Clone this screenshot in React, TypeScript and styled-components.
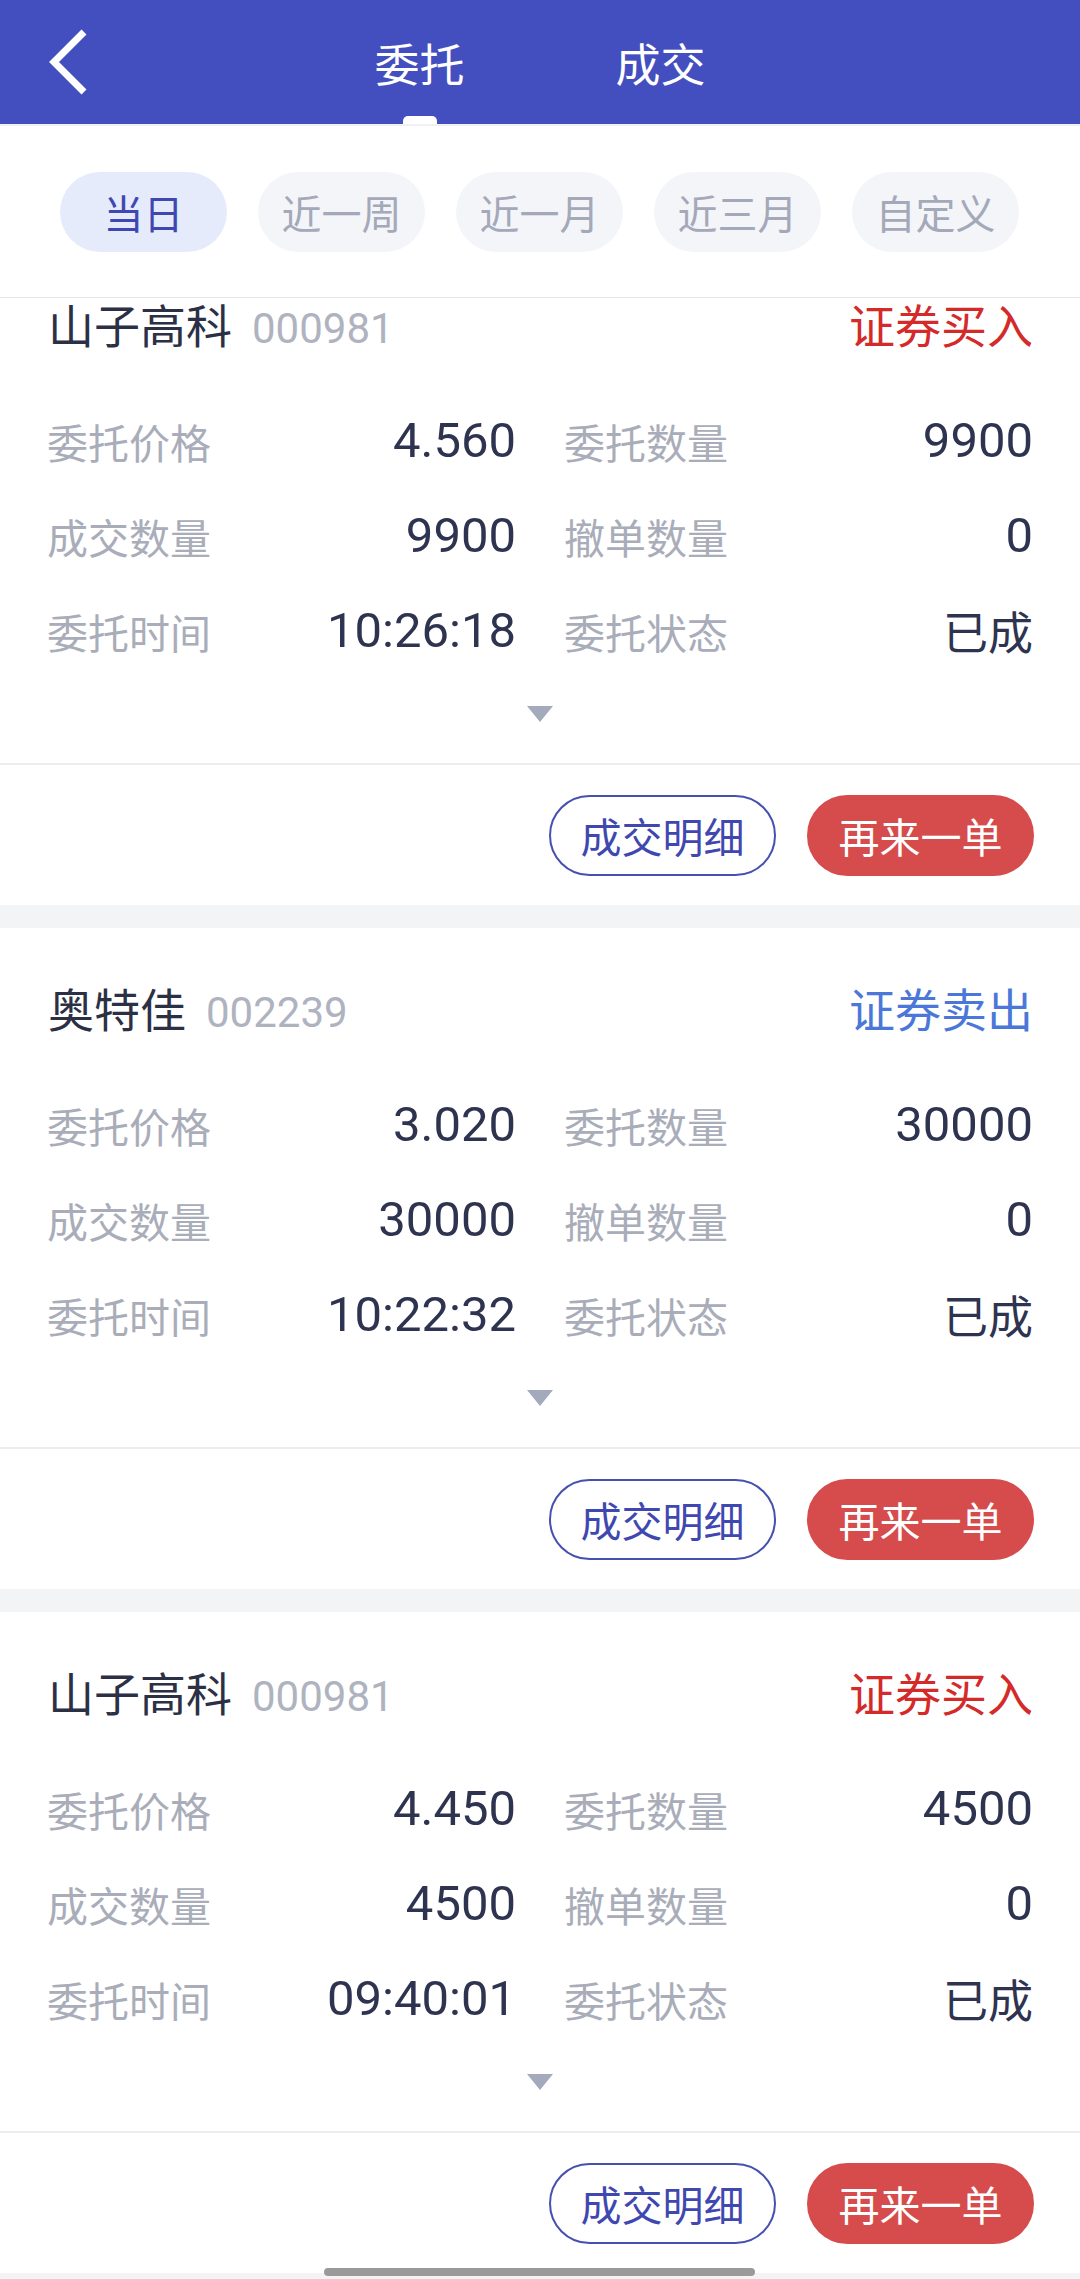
import React, { useState } from "react";
import styled, { createGlobalStyle } from "styled-components";

const colors = {
  brand: "#444fbf",
  brandText: "#3f48b0",
  title: "#2c3045",
  value: "#2e3350",
  label: "#a9adb9",
  code: "#afb3bf",
  buy: "#d42a2a",
  sell: "#4b78d8",
  line: "#ecedf0",
  band: "#f3f4f6",
  again: "#d64b4b",
};

const GlobalStyle = createGlobalStyle`
  html, body {
    margin: 0;
    padding: 0;
    background: #ffffff;
  }
  body {
    font-family: Roboto, "Noto Sans CJK SC", "Noto Sans", sans-serif;
    -webkit-font-smoothing: antialiased;
  }
  * {
    box-sizing: border-box;
  }
`;

const Page = styled.div`
  position: relative;
  width: 1080px;
  height: 2279px;
  display: flex;
  flex-direction: column;
  overflow: hidden;
  background: #ffffff;
`;

const NavBar = styled.header`
  height: 124px;
  flex-shrink: 0;
  display: grid;
  grid-template-columns: 1fr auto 1fr;
  align-items: center;
  background: ${colors.brand};
`;

const BackButton = styled.button`
  justify-self: start;
  margin-left: 44px;
  padding: 0;
  border: none;
  background: transparent;
  display: flex;
  align-items: center;
  cursor: pointer;

  svg {
    width: 44px;
    height: 66px;
  }
`;

const Tabs = styled.nav`
  display: flex;
  height: 124px;
`;

const Tab = styled.div<{ active: boolean }>`
  position: relative;
  width: 241px;
  display: flex;
  align-items: center;
  justify-content: center;
  color: #ffffff;
  font-size: 45px;
  cursor: pointer;

  &::after {
    content: "";
    display: ${(p) => (p.active ? "block" : "none")};
    position: absolute;
    bottom: 0;
    left: 50%;
    width: 34px;
    height: 8px;
    margin-left: -17px;
    border-radius: 5px 5px 0 0;
    background: #ffffff;
  }
`;

const FilterBar = styled.div`
  flex-shrink: 0;
  display: flex;
  gap: 31px;
  padding: 46px 0 45px 60px;
  border-top: 2px solid #f0f1f5;
  border-bottom: 1px solid #e6e7eb;
`;

const Chip = styled.button<{ active: boolean }>`
  width: 167px;
  height: 80px;
  border: none;
  border-radius: 40px;
  font-family: inherit;
  font-size: 40px;
  background: ${(p) => (p.active ? "#e6ebfb" : "#f4f5f9")};
  color: ${(p) => (p.active ? colors.brandText : "#a4a9b9")};
  cursor: pointer;
`;

const List = styled.div`
  flex: 1;
  overflow: hidden;
  background: ${colors.band};
`;

const ListInner = styled.div<{ scroll: number }>`
  margin-top: ${(p) => -p.scroll}px;
  display: flex;
  flex-direction: column;
  gap: 23px;
`;

const Card = styled.section`
  background: #ffffff;
`;

const CardHeader = styled.div`
  height: 149px;
  padding: 8px 47px 0 48px;
  display: flex;
  align-items: center;
  justify-content: space-between;
`;

const NameBlock = styled.div`
  display: flex;
  align-items: baseline;
  gap: 20px;
`;

const Name = styled.span`
  font-size: 46px;
  color: ${colors.title};
`;

const Code = styled.span`
  font-size: 42px;
  color: ${colors.code};
`;

const Side = styled.span<{ tone: string }>`
  font-size: 46px;
  color: ${(p) => p.tone};
`;

const FieldGrid = styled.div`
  display: grid;
  grid-template-columns: 1fr 1fr;
  grid-auto-rows: 95px;
  column-gap: 48px;
  padding: 0 47px;
`;

const Field = styled.div`
  display: flex;
  align-items: center;
  justify-content: space-between;
`;

const Label = styled.span`
  font-size: 41px;
  color: ${colors.label};
`;

const Value = styled.span<{ text?: boolean }>`
  font-size: ${(p) => (p.text ? "45px" : "49px")};
  color: ${colors.value};
`;

const Toggle = styled.div`
  height: 87px;
  padding-top: 28px;
  display: flex;
  justify-content: center;
  border-bottom: 2px solid ${colors.line};
`;

const Caret = styled.span`
  width: 0;
  height: 0;
  border-left: 13px solid transparent;
  border-right: 13px solid transparent;
  border-top: 16px solid #a3aabc;
`;

const Actions = styled.div`
  height: 140px;
  display: flex;
  align-items: center;
  justify-content: flex-end;
  gap: 31px;
  padding-right: 46px;
`;

const ActionButton = styled.button<{ primary?: boolean }>`
  width: 227px;
  height: 81px;
  border-radius: 41px;
  font-family: inherit;
  font-size: 41px;
  border: 2px solid ${(p) => (p.primary ? colors.again : "#4650b0")};
  background: ${(p) => (p.primary ? colors.again : "#ffffff")};
  color: ${(p) => (p.primary ? "#ffffff" : colors.brandText)};
  cursor: pointer;
`;

const HomeIndicator = styled.div`
  position: absolute;
  left: 324px;
  bottom: 3px;
  width: 431px;
  height: 8px;
  border-radius: 4px;
  background: #9a9a9a;
`;

interface Order {
  name: string;
  code: string;
  side: "buy" | "sell";
  price: string;
  amount: string;
  filled: string;
  cancelled: string;
  time: string;
  status: string;
}

const orders: Order[] = [
  {
    name: "山子高科",
    code: "000981",
    side: "buy",
    price: "4.560",
    amount: "9900",
    filled: "9900",
    cancelled: "0",
    time: "10:26:18",
    status: "已成",
  },
  {
    name: "奥特佳",
    code: "002239",
    side: "sell",
    price: "3.020",
    amount: "30000",
    filled: "30000",
    cancelled: "0",
    time: "10:22:32",
    status: "已成",
  },
  {
    name: "山子高科",
    code: "000981",
    side: "buy",
    price: "4.450",
    amount: "4500",
    filled: "4500",
    cancelled: "0",
    time: "09:40:01",
    status: "已成",
  },
];

const ranges = ["当日", "近一周", "近一月", "近三月", "自定义"];

const OrderCard: React.FC<{ order: Order }> = ({ order }) => {
  const fields: [string, string, boolean?][] = [
    ["委托价格", order.price],
    ["委托数量", order.amount],
    ["成交数量", order.filled],
    ["撤单数量", order.cancelled],
    ["委托时间", order.time],
    ["委托状态", order.status, true],
  ];

  return (
    <Card>
      <CardHeader>
        <NameBlock>
          <Name>{order.name}</Name>
          <Code>{order.code}</Code>
        </NameBlock>
        <Side tone={order.side === "buy" ? colors.buy : colors.sell}>
          {order.side === "buy" ? "证券买入" : "证券卖出"}
        </Side>
      </CardHeader>
      <FieldGrid>
        {fields.map(([label, value, text]) => (
          <Field key={label}>
            <Label>{label}</Label>
            <Value text={text}>{value}</Value>
          </Field>
        ))}
      </FieldGrid>
      <Toggle>
        <Caret />
      </Toggle>
      <Actions>
        <ActionButton>成交明细</ActionButton>
        <ActionButton primary>再来一单</ActionButton>
      </Actions>
    </Card>
  );
};

const App: React.FC = () => {
  const [tab, setTab] = useState(0);
  const [range, setRange] = useState(0);

  return (
    <>
      <GlobalStyle />
      <Page>
        <NavBar>
          <BackButton aria-label="返回">
            <svg viewBox="0 0 44 66" fill="none" aria-hidden="true">
              <polyline
                points="40,3 10,33 40,63"
                stroke="#ffffff"
                strokeWidth="7"
              />
            </svg>
          </BackButton>
          <Tabs>
            {["委托", "成交"].map((t, i) => (
              <Tab key={t} active={tab === i} onClick={() => setTab(i)}>
                {t}
              </Tab>
            ))}
          </Tabs>
        </NavBar>
        <FilterBar>
          {ranges.map((r, i) => (
            <Chip key={r} active={range === i} onClick={() => setRange(i)}>
              {r}
            </Chip>
          ))}
        </FilterBar>
        <List>
          <ListInner scroll={54}>
            {orders.map((o, i) => (
              <OrderCard key={i} order={o} />
            ))}
          </ListInner>
        </List>
        <HomeIndicator />
      </Page>
    </>
  );
};

export default App;
